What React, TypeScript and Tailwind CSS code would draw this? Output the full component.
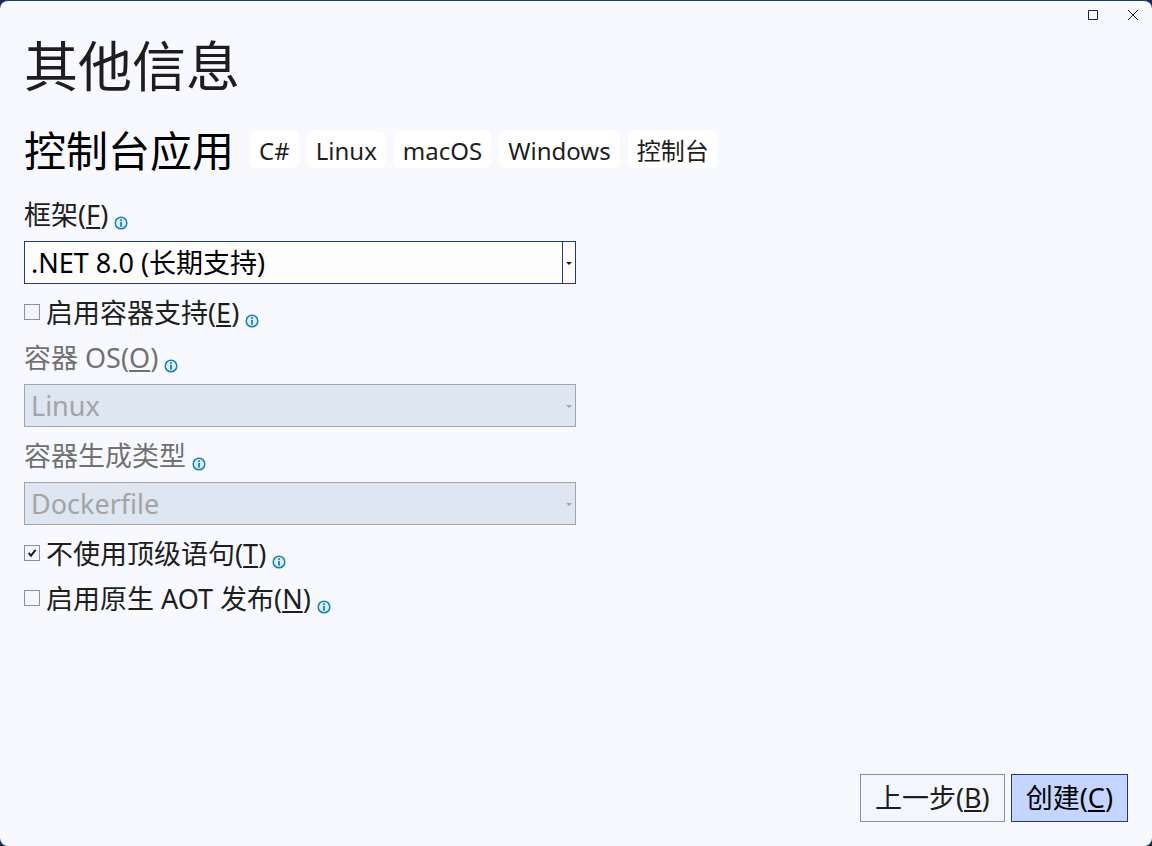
import React from 'react';

interface FieldSelectProps {
  id: string;
  value: string;
  disabled?: boolean;
}

interface CheckRowProps {
  id: string;
  text: string;
  accessKey: string;
  defaultChecked?: boolean;
}

const tags = ['C#', 'Linux', 'macOS', 'Windows', '控制台'];

const InfoIcon: React.FC = () => (
  <svg viewBox="0 0 14 14" className="mt-4 h-[14px] w-[14px] shrink-0" aria-hidden="true">
    <circle cx="7" cy="7" r="5.8" fill="#dcedf4" stroke="#1683ab" strokeWidth="1.5" />
    <rect x="6.1" y="3.2" width="1.8" height="1.7" fill="#1683ab" />
    <rect x="6.1" y="5.9" width="1.8" height="4.8" fill="#1683ab" />
  </svg>
);

const AccessKey: React.FC<{ letter: string }> = ({ letter }) => (
  <>
    (<u className="decoration-2 underline-offset-2">{letter}</u>)
  </>
);

const FieldSelect: React.FC<FieldSelectProps> = ({ id, value, disabled }) => (
  <div className="relative mt-1 mb-[6px]">
    <select
      id={id}
      disabled={disabled}
      className="block h-[43px] w-full appearance-none border border-[#1f3b79] bg-[#fdfdfd] pl-[6px] text-black opacity-100 disabled:border-[#a2a4a5] disabled:bg-[#dee6f1] disabled:text-[#a2a4a5]"
    >
      <option>{value}</option>
    </select>
    <span
      className={`pointer-events-none absolute inset-y-0 right-0 flex w-[14px] items-center justify-center pt-[2px] ${
        disabled ? 'text-[#a2a4a5]' : 'border-l border-[#1f3b79] pr-[2px] text-[#1e1e1e]'
      }`}
    >
      <svg viewBox="0 0 6 3" className="h-[3px] w-[6px]" aria-hidden="true">
        <path d="M0 0h6L3 3z" fill="currentColor" />
      </svg>
    </span>
  </div>
);

const CheckRow: React.FC<CheckRowProps> = ({ id, text, accessKey, defaultChecked }) => (
  <div className="flex h-[45px] items-center gap-[6px]">
    <span className="relative mb-[2px] h-4 w-4 shrink-0">
      <input
        id={id}
        type="checkbox"
        defaultChecked={defaultChecked}
        className="peer block h-4 w-4 appearance-none border border-[#8591a9] bg-[#f3f6fc]"
      />
      <svg
        viewBox="0 0 16 16"
        className="pointer-events-none absolute inset-0 hidden h-4 w-4 peer-checked:block"
        aria-hidden="true"
      >
        <path d="M4.6 8 7 10.6 11.6 4.8" fill="none" stroke="#1e1e1e" strokeWidth="2" />
      </svg>
    </span>
    <label htmlFor={id}>
      {text}
      <AccessKey letter={accessKey} />
    </label>
    <InfoIcon />
  </div>
);

const App: React.FC = () => {
  return (
    <div className="bg-[#1b2c50] font-['Noto_Sans','Noto_Sans_CJK_SC',sans-serif] text-[27px] leading-9 text-[#1e1e1e]">
      <div className="flex min-h-screen flex-col rounded-lg border-t border-[#1f3b79] bg-[#f8f9ff] px-6 pb-6">
        <div className="-mr-[13px] flex h-7 items-center justify-end gap-6">
          <button type="button" aria-label="最大化" className="flex h-4 w-4 items-center justify-center">
            <svg viewBox="0 0 10 10" className="h-[10px] w-[10px]">
              <path d="M.5.5h9v9h-9z" fill="none" stroke="#15233f" />
            </svg>
          </button>
          <button type="button" aria-label="关闭" className="flex h-4 w-4 items-center justify-center">
            <svg viewBox="0 0 10 10" className="h-[10px] w-[10px]">
              <path d="M0 0l10 10M10 0 0 10" stroke="#15233f" />
            </svg>
          </button>
        </div>

        <h1 className="text-[54px] leading-[74px]">其他信息</h1>

        <div className="mt-[18px] flex h-[60px] items-center gap-4">
          <h2 className="text-[42px] leading-[60px] text-black">控制台应用</h2>
          <ul className="mb-1 flex gap-2 text-2xl leading-[40px]">
            {tags.map((tag) => (
              <li key={tag} className="h-[37px] rounded-md bg-white px-[9px]">
                {tag}
              </li>
            ))}
          </ul>
        </div>

        <form className="mt-[11px] w-full max-w-[552px]">
          <div className="flex h-[45px] items-center gap-[6px]">
            <label htmlFor="framework">
              框架
              <AccessKey letter="F" />
            </label>
            <InfoIcon />
          </div>
          <FieldSelect id="framework" value=".NET 8.0 (长期支持)" />

          <CheckRow id="container" text="启用容器支持" accessKey="E" />

          <div className="flex h-[45px] items-center gap-[6px]">
            <label htmlFor="container-os" className="text-[#717171]">
              容器 OS
              <AccessKey letter="O" />
            </label>
            <InfoIcon />
          </div>
          <FieldSelect id="container-os" value="Linux" disabled />

          <div className="flex h-[45px] items-center gap-[6px]">
            <label htmlFor="build-type" className="text-[#717171]">
              容器生成类型
            </label>
            <InfoIcon />
          </div>
          <FieldSelect id="build-type" value="Dockerfile" disabled />

          <CheckRow id="top-level" text="不使用顶级语句" accessKey="T" defaultChecked />
          <CheckRow id="aot" text="启用原生 AOT 发布" accessKey="N" />
        </form>

        <div className="mt-auto flex justify-end gap-[6px]">
          <button type="button" className="h-12 border border-[#8591a9] bg-[#f3f6fc] px-[14px]">
            上一步
            <AccessKey letter="B" />
          </button>
          <button type="button" className="h-12 border border-[#1f3b79] bg-[#c4d5ff] px-[14px] text-black">
            创建
            <AccessKey letter="C" />
          </button>
        </div>
      </div>
    </div>
  );
};

export default App;
